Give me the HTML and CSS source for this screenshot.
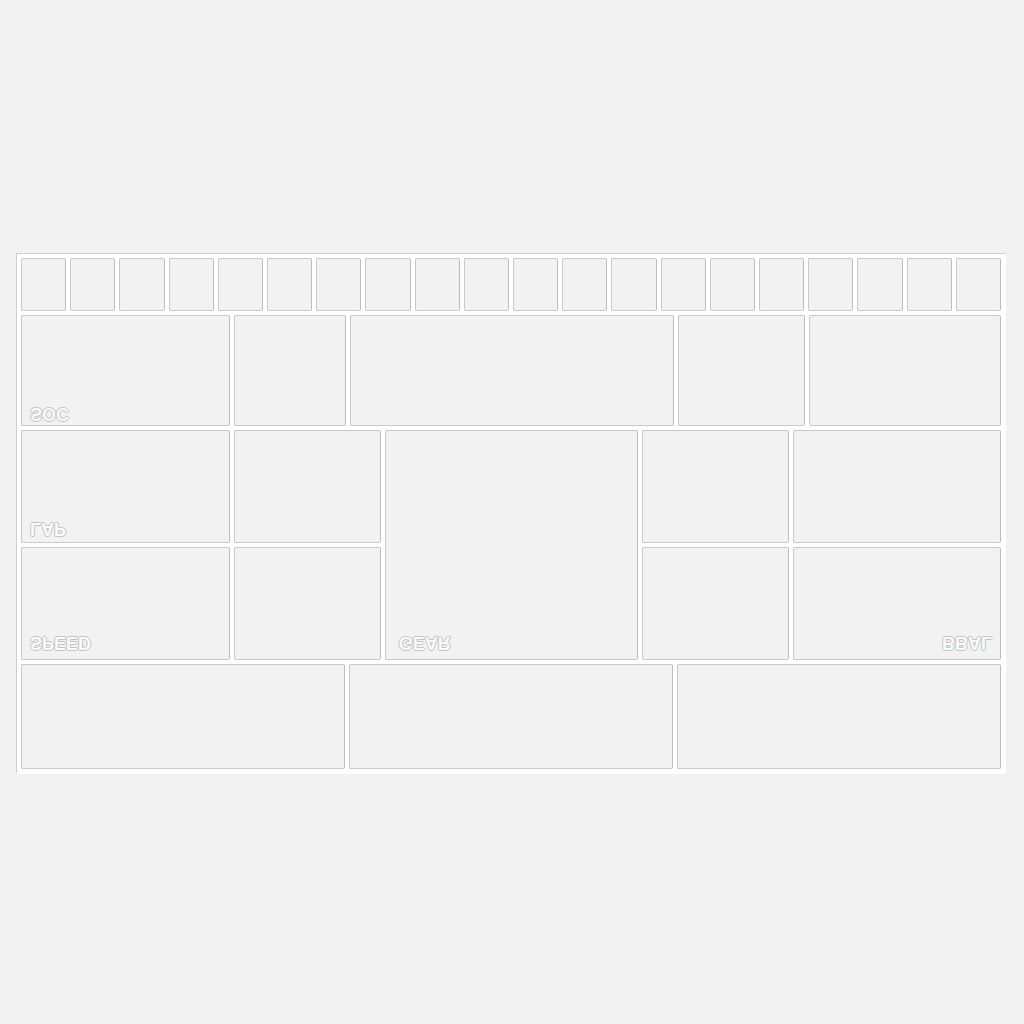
FILE: index.html
```html
<!DOCTYPE html>
<html lang="en">
<head>
    <meta charset="UTF-8">
    <meta name="viewport" content="width=device-width, initial-scale=1.0">
    <title>Dash</title>
    <link rel="stylesheet" href="styles.css">
</head>
<body>
    <div class="dash">
        <div class="row cells">
            <div class="cell"></div><div class="cell"></div><div class="cell"></div><div class="cell"></div>
            <div class="cell"></div><div class="cell"></div><div class="cell"></div><div class="cell"></div>
            <div class="cell"></div><div class="cell"></div><div class="cell"></div><div class="cell"></div>
            <div class="cell"></div><div class="cell"></div><div class="cell"></div><div class="cell"></div>
            <div class="cell"></div><div class="cell"></div><div class="cell"></div><div class="cell"></div>
        </div>
        <div class="row top">
            <div class="cell"><span class="label">SOC</span></div>
            <div class="cell"></div>
            <div class="cell"></div>
            <div class="cell"></div>
            <div class="cell"></div>
        </div>
        <div class="row middle">
            <div class="cell upper"><span class="label">LAP</span></div>
            <div class="cell"></div>
            <div class="cell gear lower"><span class="label">GEAR</span></div>
            <div class="cell"></div>
            <div class="cell"></div>
            <div class="cell lower"><span class="label">SPEED</span></div>
            <div class="cell"></div>
            <div class="cell"></div>
            <div class="cell right lower"><span class="label">BBAL</span></div>
        </div>
        <div class="row bottom">
            <div class="cell"></div>
            <div class="cell"></div>
            <div class="cell"></div>
        </div>
    </div>
</body>
</html>
```

FILE: styles.css
```css
* {
    box-sizing: border-box;
}
body {
    margin: 0;
    padding: 2px 0 0 16px;
    background-color: #f2f2f2;
    font-family: "Liberation Sans", Arial, sans-serif;
    display: flex;
    align-items: center;
    height: 100vh;
}
.dash {
    width: 990px;
    background: #fff;
    padding: 4px;
    border-top: 1px solid #cfcfcf;
    border-left: 1px solid #cfcfcf;
    border-right: 1px solid #fff;
    border-bottom: 1px solid #fff;
    display: flex;
    flex-direction: column;
    gap: 4px;
}
.row {
    display: grid;
    gap: 4px;
}
.cells {
    grid-template-columns: repeat(20, 1fr);
    height: 53px;
}
.top {
    grid-template-columns: 209fr 112fr 323fr 127fr 192fr;
    height: 111px;
}
.middle {
    grid-template-columns: 209fr 147fr 254fr 147fr 208fr;
    grid-template-rows: 113px 113px;
}
.bottom {
    grid-template-columns: 1fr 1fr 1fr;
    height: 105px;
}
.cell {
    background: #f2f2f2;
    border: 1px solid #c9c9c9;
    border-right-color: #bcbcbc;
    border-radius: 2px;
    display: flex;
    align-items: flex-end;
    padding: 0 8px 2px;
}
.upper {
    padding-bottom: 4px;
}
.lower {
    padding-bottom: 7px;
}
.gear {
    grid-column: 3;
    grid-row: 1 / 3;
    padding-left: 13px;
}
.right {
    justify-content: flex-end;
}
.label {
    font-size: 18px;
    font-weight: bold;
    line-height: 18px;
    color: #fafafa;
    text-shadow: 1px 0 #c4c4c4, -1px 0 #c4c4c4, 0 1px #c4c4c4, 0 -1px #c4c4c4;
    transform: scaleY(-1);
}
```
